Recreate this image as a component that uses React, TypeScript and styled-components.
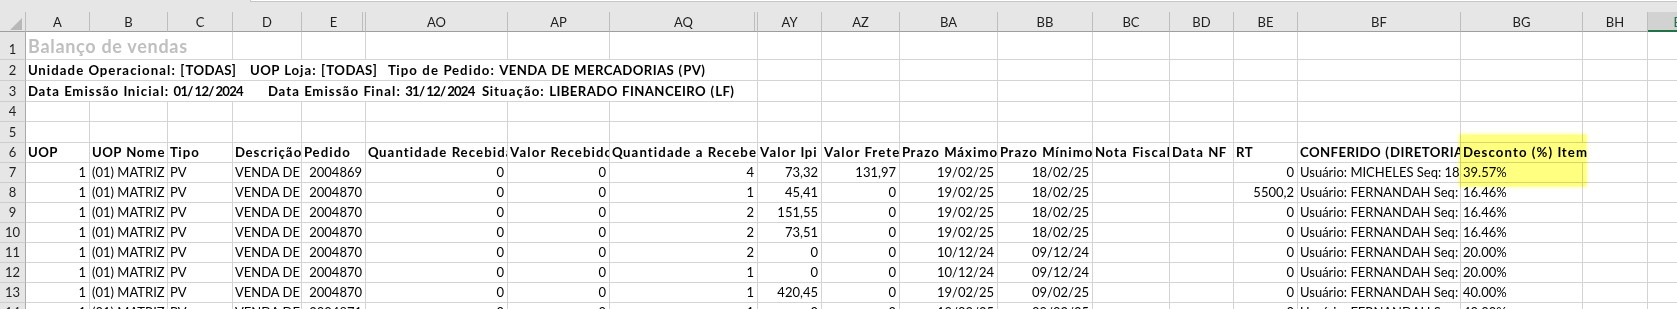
import styled, { createGlobalStyle, css } from 'styled-components';

type Align = 'l' | 'r';

interface ColDef {
  key: string;
  w: number;
  gap?: boolean;
  selected?: boolean;
  align: Align;
}

interface CellDef {
  t: string;
  a?: Align;
  span?: number;
  b?: boolean;
  title?: boolean;
  parts?: { t: string; w?: number }[];
}

const cols: ColDef[] = [
  { key: 'A', w: 64, align: 'r' },
  { key: 'B', w: 78, align: 'l' },
  { key: 'C', w: 65, align: 'l' },
  { key: 'D', w: 69, align: 'l' },
  { key: 'E', w: 64, align: 'r', gap: true },
  { key: 'AO', w: 142, align: 'r' },
  { key: 'AP', w: 102, align: 'r' },
  { key: 'AQ', w: 148, align: 'r', gap: true },
  { key: 'AY', w: 64, align: 'r' },
  { key: 'AZ', w: 78, align: 'r' },
  { key: 'BA', w: 98, align: 'r' },
  { key: 'BB', w: 95, align: 'r' },
  { key: 'BC', w: 77, align: 'l' },
  { key: 'BD', w: 64, align: 'l' },
  { key: 'BE', w: 64, align: 'r' },
  { key: 'BF', w: 163, align: 'l' },
  { key: 'BG', w: 122, align: 'l' },
  { key: 'BH', w: 65, align: 'l' },
  { key: 'BI', w: 64, align: 'l', selected: true },
];

const rowHeights = [28, 21, 21, 20, 21, 20, 20, 20, 20, 20, 20, 20, 20, 20];

const empties = (n: number): CellDef[] => Array.from({ length: n }, () => ({ t: '' }));

const headers = [
  'UOP', 'UOP Nome', 'Tipo', 'Descrição', 'Pedido', 'Quantidade Recebida', 'Valor Recebido',
  'Quantidade a Receber', 'Valor Ipi', 'Valor Frete', 'Prazo Máximo', 'Prazo Mínimo',
  'Nota Fiscal', 'Data NF', 'RT', 'CONFERIDO (DIRETORIA)',
];

const data: string[][] = [
  ['1', '(01) MATRIZ', 'PV', 'VENDA DE MERCADORIAS', '2004869', '0', '0', '4', '73,32', '131,97', '19/02/25', '18/02/25', '', '', '0', 'Usuário: MICHELES Seq: 1852', '39.57%', '', ''],
  ['1', '(01) MATRIZ', 'PV', 'VENDA DE MERCADORIAS', '2004870', '0', '0', '1', '45,41', '0', '19/02/25', '18/02/25', '', '', '5500,2', 'Usuário: FERNANDAH Seq: 1853', '16.46%', '', ''],
  ['1', '(01) MATRIZ', 'PV', 'VENDA DE MERCADORIAS', '2004870', '0', '0', '2', '151,55', '0', '19/02/25', '18/02/25', '', '', '0', 'Usuário: FERNANDAH Seq: 1853', '16.46%', '', ''],
  ['1', '(01) MATRIZ', 'PV', 'VENDA DE MERCADORIAS', '2004870', '0', '0', '2', '73,51', '0', '19/02/25', '18/02/25', '', '', '0', 'Usuário: FERNANDAH Seq: 1853', '16.46%', '', ''],
  ['1', '(01) MATRIZ', 'PV', 'VENDA DE MERCADORIAS', '2004870', '0', '0', '2', '0', '0', '10/12/24', '09/12/24', '', '', '0', 'Usuário: FERNANDAH Seq: 1853', '20.00%', '', ''],
  ['1', '(01) MATRIZ', 'PV', 'VENDA DE MERCADORIAS', '2004870', '0', '0', '1', '0', '0', '10/12/24', '09/12/24', '', '', '0', 'Usuário: FERNANDAH Seq: 1853', '20.00%', '', ''],
  ['1', '(01) MATRIZ', 'PV', 'VENDA DE MERCADORIAS', '2004870', '0', '0', '1', '420,45', '0', '19/02/25', '09/02/25', '', '', '0', 'Usuário: FERNANDAH Seq: 1853', '40.00%', '', ''],
  ['1', '(01) MATRIZ', 'PV', 'VENDA DE MERCADORIAS', '2004871', '0', '0', '1', '0', '0', '19/02/25', '09/02/25', '', '', '0', 'Usuário: FERNANDAH Seq: 1853', '40.00%', '', ''],
];

const rows: CellDef[][] = [
  [{ t: 'Balanço de vendas', span: 3, title: true }, ...empties(16)],
  [
    {
      t: '',
      span: 8,
      b: true,
      parts: [
        { t: 'Unidade Operacional: [TODAS]', w: 222 },
        { t: 'UOP Loja: [TODAS]', w: 138 },
        { t: 'Tipo de Pedido: VENDA DE MERCADORIAS (PV)' },
      ],
    },
    ...empties(11),
  ],
  [
    {
      t: '',
      span: 8,
      b: true,
      parts: [
        { t: 'Data Emissão Inicial: 01/12/2024', w: 240 },
        { t: 'Data Emissão Final: 31/12/2024', w: 214 },
        { t: 'Situação: LIBERADO FINANCEIRO (LF)' },
      ],
    },
    ...empties(11),
  ],
  empties(19),
  empties(19),
  [...headers.map((h) => ({ t: h, b: true, a: 'l' as Align })), { t: 'Desconto (%) Item', b: true, span: 2 }, { t: '' }],
  ...data.map((r) => r.map((v, i) => ({ t: v, a: cols[i].align }))),
];

const GlobalStyle = createGlobalStyle`
  html, body {
    margin: 0;
    padding: 0;
    overflow: hidden;
    background: #fff;
  }
  body {
    font-family: Lato, "Liberation Sans", sans-serif;
  }
`;

const Page = styled.div`
  position: relative;
  width: 1677px;
  height: 309px;
  overflow: hidden;
  background: #fff;
`;

const TopStrip = styled.div`
  height: 12px;
  background: #e6e6e6;
  display: flex;
`;

const FormulaBox = styled.div`
  margin-left: 250px;
  flex: 1;
  height: 1px;
  background: #fff;
  border-left: 1px solid #c6c6c6;
  border-bottom: 1px solid #c6c6c6;
`;

const Sheet = styled.div`
  display: grid;
  grid-template-columns: 26px ${cols.map((c) => `${c.w}px`).join(' ')};
  grid-template-rows: 20px ${rowHeights.map((h) => `${h}px`).join(' ')};
  width: max-content;
  font-size: 13px;
`;

const Corner = styled.div`
  position: relative;
  background: #e6e6e6;
  border-right: 1px solid #bdbdbd;
  border-bottom: 1px solid #9e9e9e;
  &::after {
    content: '';
    position: absolute;
    left: 10px;
    top: 6px;
    width: 12px;
    height: 12px;
    background: #b8b8b8;
    clip-path: polygon(100% 0, 100% 100%, 0 100%);
  }
`;

const ColHead = styled.div<{ $selected?: boolean; $gap?: boolean }>`
  position: relative;
  box-sizing: border-box;
  background: ${(p) => (p.$selected ? '#d2d2d2' : '#e6e6e6')};
  border-right: 1px solid #bdbdbd;
  border-bottom: ${(p) => (p.$selected ? '2px solid #217346' : '1px solid #9e9e9e')};
  color: ${(p) => (p.$selected ? '#217346' : '#1f1f1f')};
  text-align: center;
  line-height: 20px;
  white-space: nowrap;
  overflow: hidden;
  ${(p) =>
    p.$gap &&
    css`
      &::after {
        content: '';
        position: absolute;
        right: 2px;
        top: 0;
        bottom: 0;
        width: 1px;
        background: #bdbdbd;
      }
    `}
`;

const RowHead = styled.div`
  box-sizing: border-box;
  background: #e6e6e6;
  border-right: 1px solid #a9a9a9;
  border-bottom: 1px solid #cdcdcd;
  color: #1f1f1f;
  display: flex;
  align-items: flex-end;
  justify-content: center;
  line-height: 20px;
`;

const Cell = styled.div<{ $align?: Align; $bold?: boolean; $span?: number }>`
  box-sizing: border-box;
  grid-column: span ${(p) => p.$span ?? 1};
  border-right: 1px solid #d4d4d4;
  border-bottom: 1px solid #d4d4d4;
  padding: 0 3px 0 2px;
  overflow: hidden;
  white-space: pre;
  text-align: ${(p) => (p.$align === 'r' ? 'right' : 'left')};
  font-weight: ${(p) => (p.$bold ? 700 : 400)};
  font-size: ${(p) => (p.$bold ? '13.2px' : '13px')};
  letter-spacing: ${(p) => (p.$bold ? '1.1px' : '0')};
  color: #000;
  line-height: 20px;
  display: flex;
  flex-direction: column;
  justify-content: flex-end;
`;

// bold Calibri has narrow figures and capitals compared with Lato Bold
const Caps = styled.span`
  letter-spacing: 0.4px;
`;

const Digits = styled.span`
  letter-spacing: -0.8px;
`;

const PartLine = styled.div`
  display: flex;
`;

const Part = styled.span<{ $w?: number }>`
  flex: ${(p) => (p.$w ? `0 0 ${p.$w}px` : '0 0 auto')};
  min-width: 0;
  white-space: pre;
`;

const TitleCell = styled(Cell)`
  font-size: 18px;
  letter-spacing: 0.7px;
  line-height: 29px;
  color: #bfbfbf;
  justify-content: flex-start;
`;

const Highlight = styled.div`
  position: absolute;
  left: 1460px;
  top: 135px;
  width: 126px;
  height: 51px;
  background: #ffff80;
  box-shadow: 0 0 3px 1px #ffff80;
  mix-blend-mode: multiply;
  pointer-events: none;
`;

function boldRuns(text: string) {
  return text.split(/([A-ZÀ-Ý]+|\d+)/).map((s, i) => {
    if (!s) return null;
    if (/^\d+$/.test(s)) return <Digits key={i}>{s}</Digits>;
    if (/^[A-ZÀ-Ý]+$/.test(s)) return <Caps key={i}>{s}</Caps>;
    return <span key={i}>{s}</span>;
  });
}

export default function App() {
  return (
    <Page>
      <GlobalStyle />
      <TopStrip>
        <FormulaBox />
      </TopStrip>
      <Sheet>
        <Corner />
        {cols.map((c) => (
          <ColHead key={c.key} $selected={c.selected} $gap={c.gap}>
            {c.key}
          </ColHead>
        ))}
        {rows.map((row, ri) => (
          <>
            <RowHead key={`h${ri}`}>{ri + 1}</RowHead>
            {row.map((cell, ci) =>
              cell.title ? (
                <TitleCell key={`${ri}-${ci}`} $span={cell.span} $bold>
                  {cell.t}
                </TitleCell>
              ) : (
                <Cell key={`${ri}-${ci}`} $span={cell.span} $bold={cell.b} $align={cell.a}>
                  {cell.parts ? (
                    <PartLine>
                      {cell.parts.map((p) => (
                        <Part key={p.t} $w={p.w}>
                          {boldRuns(p.t)}
                        </Part>
                      ))}
                    </PartLine>
                  ) : cell.b ? (
                    <span>{boldRuns(cell.t)}</span>
                  ) : (
                    cell.t
                  )}
                </Cell>
              )
            )}
          </>
        ))}
      </Sheet>
      <Highlight />
    </Page>
  );
}
